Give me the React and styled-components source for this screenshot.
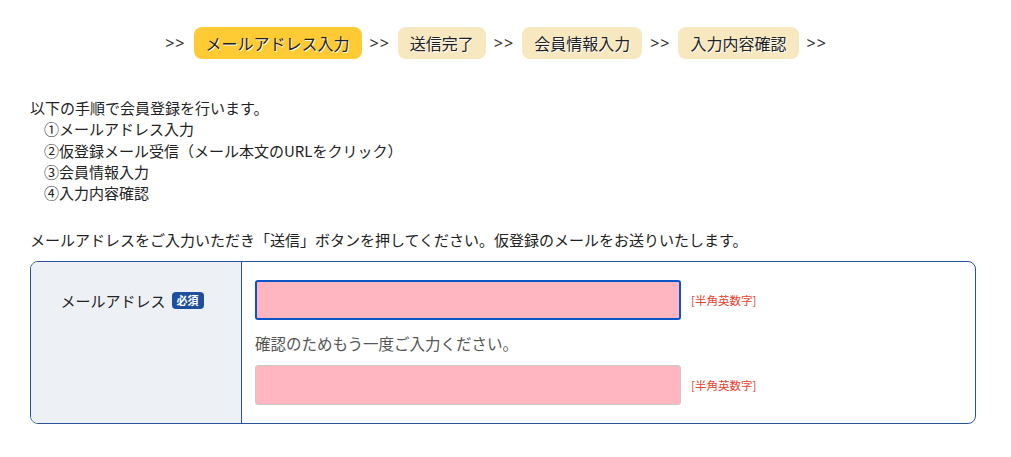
import React from "react";
import styled, { createGlobalStyle } from "styled-components";

const Global = createGlobalStyle`
  html, body { margin: 0; padding: 0; background: #fff; }
  body {
    font-family: "Noto Sans CJK JP", "Noto Sans", sans-serif;
    color: #222;
  }
  * { box-sizing: border-box; }
`;

const Page = styled.div`
  width: 946px;
  margin-left: 30px;
  padding-top: 27px;
`;

const Steps = styled.nav`
  display: flex;
  justify-content: center;
  align-items: center;
  gap: 8px;
  padding-right: 14px;
`;

const Sep = styled.span`
  font-family: "Noto Sans", sans-serif;
  font-size: 16px;
  color: #333;
  letter-spacing: 1px;
`;

const Step = styled.span`
  display: inline-block;
  height: 32px;
  line-height: 32px;
  padding: 0 12px;
  border-radius: 8px;
  font-size: 16px;
  color: #222;
  text-shadow: 1px 1px 0 #fff;
  background: ${(p) => (p.$active ? "#ffcb34" : "#f8e8bf")};
`;

const Intro = styled.div`
  margin-top: 38px;
  font-size: 15px;
  line-height: 21.3px;
`;

const Line = styled.div`
  padding-left: ${(p) => (p.$indent ? "14px" : "0")};
`;

const Lead = styled.p`
  margin: 26px 0 11px;
  font-size: 15px;
  line-height: 21px;
`;

const Table = styled.div`
  display: grid;
  grid-template-columns: 211px 1fr;
  border: 1px solid #2b5399;
  border-radius: 8px;
  overflow: hidden;
`;

const Head = styled.div`
  background: #edf1f6;
  border-right: 1px solid #2b5399;
  padding: 28px 8px 0 0;
  text-align: center;
  font-size: 15px;
  color: #222;
`;

const Req = styled.span`
  display: inline-block;
  margin-left: 6px;
  padding: 0 5px;
  height: 17px;
  line-height: 17px;
  border-radius: 4px;
  background: #1f4e9c;
  color: #fff;
  font-size: 11px;
  font-weight: bold;
  vertical-align: 2px;
`;

const Body = styled.div`
  padding: 18px 13px 18px 13px;
  display: flex;
  flex-direction: column;
`;

const Row = styled.div`
  display: flex;
  align-items: center;
  gap: 10px;
`;

const Input = styled.input`
  width: 426px;
  height: 40px;
  background: #ffb6c1;
  border: ${(p) => (p.$focus ? "2px solid #0a56c9" : "1px solid #c8c8c8")};
  border-radius: 3px;
  outline: none;
  padding: 0 8px;
  font-size: 15px;
`;

const Note = styled.span`
  font-size: 11.5px;
  color: #e8432f;
`;

const Confirm = styled.div`
  font-size: 15.5px;
  color: #555;
  line-height: 22px;
  margin: 12px 0 11px;
`;

export default function App() {
  const steps = ["メールアドレス入力", "送信完了", "会員情報入力", "入力内容確認"];
  return (
    <Page>
      <Global />
      <Steps>
        <Sep>&gt;&gt;</Sep>
        {steps.map((s, i) => (
          <React.Fragment key={s}>
            <Step $active={i === 0}>{s}</Step>
            <Sep>&gt;&gt;</Sep>
          </React.Fragment>
        ))}
      </Steps>
      <Intro>
        <Line>以下の手順で会員登録を行います。</Line>
        <Line $indent>①メールアドレス入力</Line>
        <Line $indent>②仮登録メール受信（メール本文のURLをクリック）</Line>
        <Line $indent>③会員情報入力</Line>
        <Line $indent>④入力内容確認</Line>
      </Intro>
      <Lead>メールアドレスをご入力いただき「送信」ボタンを押してください。仮登録のメールをお送りいたします。</Lead>
      <Table>
        <Head>
          メールアドレス<Req>必須</Req>
        </Head>
        <Body>
          <Row>
            <Input $focus type="text" />
            <Note>[半角英数字]</Note>
          </Row>
          <Confirm>確認のためもう一度ご入力ください。</Confirm>
          <Row>
            <Input type="text" />
            <Note>[半角英数字]</Note>
          </Row>
        </Body>
      </Table>
    </Page>
  );
}
